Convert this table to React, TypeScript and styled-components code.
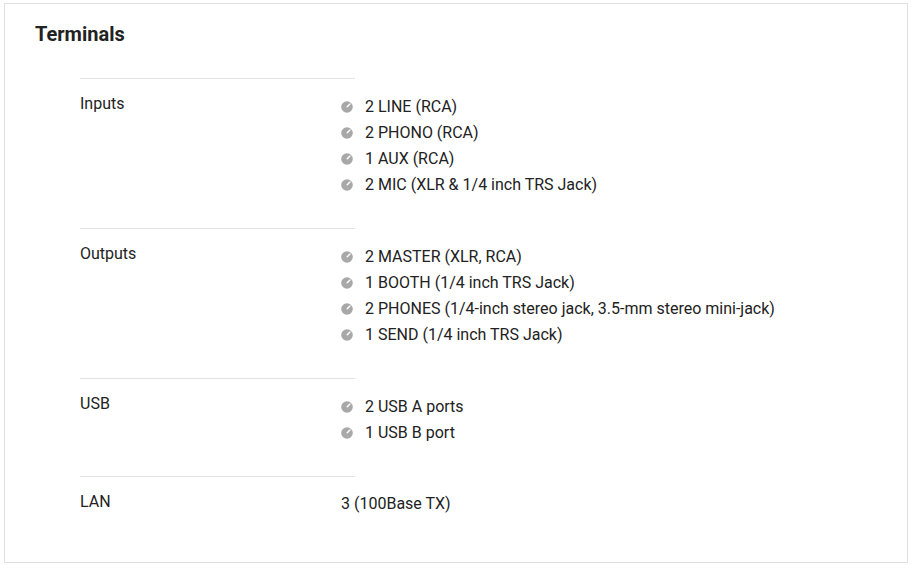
import React from 'react';
import styled, { createGlobalStyle } from 'styled-components';

const GlobalStyle = createGlobalStyle`
	html, body {
		margin: 0;
		padding: 0;
		background: #fff;
	}
	body {
		font-family: Roboto, 'Liberation Sans', sans-serif;
		color: #222;
	}
`;

interface Spec {
	label: string;
	items: string[];
	plain?: boolean;
}

const specs: Spec[] = [
	{
		label: 'Inputs',
		items: ['2 LINE (RCA)', '2 PHONO (RCA)', '1 AUX (RCA)', '2 MIC (XLR & 1/4 inch TRS Jack)'],
	},
	{
		label: 'Outputs',
		items: [
			'2 MASTER (XLR, RCA)',
			'1 BOOTH (1/4 inch TRS Jack)',
			'2 PHONES (1/4-inch stereo jack, 3.5-mm stereo mini-jack)',
			'1 SEND (1/4 inch TRS Jack)',
		],
	},
	{
		label: 'USB',
		items: ['2 USB A ports', '1 USB B port'],
	},
	{
		label: 'LAN',
		items: ['3 (100Base TX)'],
		plain: true,
	},
];

const Bullet = () => (
	<svg width="12" height="12" viewBox="0 0 12 12">
		<circle cx="6" cy="6" r="5.8" fill="#a8a8a8" />
		<line x1="6.2" y1="5.8" x2="9" y2="3" stroke="#fff" strokeWidth="1.4" strokeLinecap="round" />
	</svg>
);

export default function App() {
	return (
		<>
			<GlobalStyle />
			<Panel>
				<Title>Terminals</Title>
				<Table>
					{specs.map((spec) => (
						<Row key={spec.label}>
							<Label>{spec.label}</Label>
							{spec.plain ? (
								<PlainValue>{spec.items[0]}</PlainValue>
							) : (
								<List>
									{spec.items.map((item) => (
										<Item key={item}>
											<Bullet />
											<span>{item}</span>
										</Item>
									))}
								</List>
							)}
						</Row>
					))}
				</Table>
			</Panel>
		</>
	);
}

const Panel = styled.section`
	box-sizing: border-box;
	width: 904px;
	height: 560px;
	margin: 3px 0 0 4px;
	padding: 18px 30px 0;
	border: 1px solid #e0e0e0;
	background: #fff;
`;

const Title = styled.h2`
	margin: 0;
	font-size: 20px;
	line-height: 24px;
	font-weight: 700;
	color: #222;
`;

const Table = styled.div`
	margin: 32px 0 0 45px;
`;

const Row = styled.div`
	position: relative;
	display: grid;
	grid-template-columns: 261px 1fr;
	padding: 13px 0 30px;
	font-size: 16px;
	line-height: 26px;

	&::before {
		content: '';
		position: absolute;
		top: 0;
		left: 0;
		width: 275px;
		height: 1px;
		background: #e3e3e3;
	}
`;

const Label = styled.div`
	color: #222;
`;

const List = styled.ul`
	list-style: none;
	margin: 3px 0 0;
	padding: 0;
`;

const Item = styled.li`
	display: flex;
	align-items: center;
	gap: 12px;
	height: 26px;
	color: #222;
	white-space: nowrap;

	svg {
		flex: none;
		margin-top: -1px;
	}
`;

const PlainValue = styled.div`
	margin-top: 2px;
	color: #222;
`;
